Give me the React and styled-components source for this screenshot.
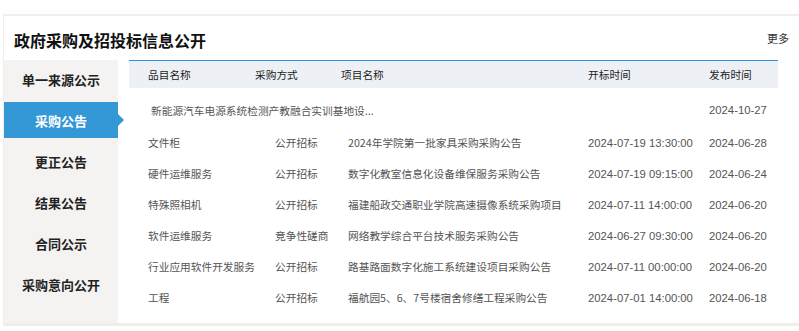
import React from "react";
import styled, { createGlobalStyle } from "styled-components";

const GlobalStyle = createGlobalStyle`
  body {
    margin: 0;
    background: #fff;
    font-family: "Liberation Sans", "Noto Sans CJK SC", sans-serif;
  }
`;

const Panel = styled.section`
  margin: 14px 0 0 3px;
  width: 800px;
  border-top: 2px solid #f1ede9;
  border-left: 1px solid #f1ede9;
  border-bottom: 3px solid #f1ede9;
  box-sizing: border-box;
`;

const TitleBar = styled.div`
  display: flex;
  align-items: center;
  justify-content: space-between;
  height: 44px;
  padding: 0 14px 0 10px;
  box-sizing: border-box;
`;

const Title = styled.h2`
  margin: 0;
  font-family: "Noto Sans CJK SC", sans-serif;
  font-size: 16px;
  font-weight: 700;
  color: #111;
  padding-top: 4px;
`;

const More = styled.a`
  font-family: "Noto Sans CJK SC", sans-serif;
  font-size: 11px;
  color: #333;
  text-decoration: none;
  cursor: pointer;
`;

const Content = styled.div`
  display: flex;
  gap: 11px;
`;

const Sidebar = styled.nav`
  width: 114px;
  height: 262px;
  background: #f5f3f1;
  padding-top: 1px;
  display: flex;
  flex-direction: column;
  gap: 5px;
`;

const Tab = styled.div`
  position: relative;
  height: 36px;
  display: flex;
  align-items: center;
  justify-content: center;
  font-family: "Noto Sans CJK SC", sans-serif;
  font-size: 13px;
  font-weight: 700;
  color: ${(p) => (p.$active ? "#fff" : "#222")};
  background: ${(p) => (p.$active ? "#3498d6" : "transparent")};
  cursor: pointer;

  &::after {
    content: "";
    display: ${(p) => (p.$active ? "block" : "none")};
    position: absolute;
    right: -6px;
    top: 50%;
    margin-top: -6px;
    border-top: 6px solid transparent;
    border-bottom: 6px solid transparent;
    border-left: 6px solid #3498d6;
  }
`;

const Table = styled.div`
  width: 649px;
`;

const HeadRow = styled.div`
  display: grid;
  grid-template-columns: 107px 86px 247px 121px 1fr;
  align-items: center;
  height: 27px;
  padding-left: 19px;
  background: #edf1f5;
  border-top: 1px solid #2e8fd9;
  font-family: "Noto Sans CJK SC", sans-serif;
  font-size: 10.7px;
  color: #222;
`;

const Body = styled.div`
  padding-top: 5px;
`;

const Row = styled.div`
  display: grid;
  grid-template-columns: ${(p) =>
    p.$wide ? "437px 121px 1fr" : "127px 73px 240px 121px 1fr"};
  align-items: center;
  height: ${(p) => (p.$wide ? "34px" : "31px")};
  padding-left: ${(p) => (p.$wide ? "22px" : "19px")};
  font-family: "Noto Sans CJK SC", sans-serif;
  font-size: 10.7px;
  color: #555;
`;

const Cell = styled.span`
  white-space: nowrap;
  overflow: hidden;
`;

const DateCell = styled.span`
  font-family: "Liberation Sans", sans-serif;
  font-size: 11.3px;
  color: #555;
  white-space: nowrap;
`;

const tabs = ["单一来源公示", "采购公告", "更正公告", "结果公告", "合同公示", "采购意向公开"];

const rows = [
  ["文件柜", "公开招标", "2024年学院第一批家具采购采购公告", "2024-07-19 13:30:00", "2024-06-28"],
  ["硬件运维服务", "公开招标", "数字化教室信息化设备维保服务采购公告", "2024-07-19 09:15:00", "2024-06-24"],
  ["特殊照相机", "公开招标", "福建船政交通职业学院高速摄像系统采购项目", "2024-07-11 14:00:00", "2024-06-20"],
  ["软件运维服务", "竞争性磋商", "网络教学综合平台技术服务采购公告", "2024-06-27 09:30:00", "2024-06-20"],
  ["行业应用软件开发服务", "公开招标", "路基路面数字化施工系统建设项目采购公告", "2024-07-11 00:00:00", "2024-06-20"],
  ["工程", "公开招标", "福航园5、6、7号楼宿舍修缮工程采购公告", "2024-07-01 14:00:00", "2024-06-18"],
];

export default function App() {
  return (
    <>
      <GlobalStyle />
      <Panel>
        <TitleBar>
          <Title>政府采购及招投标信息公开</Title>
          <More>更多</More>
        </TitleBar>
        <Content>
          <Sidebar>
            {tabs.map((t) => (
              <Tab key={t} $active={t === "采购公告"}>
                {t}
              </Tab>
            ))}
          </Sidebar>
          <Table>
            <HeadRow>
              <span>品目名称</span>
              <span>采购方式</span>
              <span>项目名称</span>
              <span>开标时间</span>
              <span>发布时间</span>
            </HeadRow>
            <Body>
              <Row $wide>
                <Cell>新能源汽车电源系统检测产教融合实训基地设...</Cell>
                <span />
                <DateCell>2024-10-27</DateCell>
              </Row>
              {rows.map((r) => (
                <Row key={r[2]}>
                  <Cell>{r[0]}</Cell>
                  <Cell>{r[1]}</Cell>
                  <Cell>{r[2]}</Cell>
                  <DateCell>{r[3]}</DateCell>
                  <DateCell>{r[4]}</DateCell>
                </Row>
              ))}
            </Body>
          </Table>
        </Content>
      </Panel>
    </>
  );
}
